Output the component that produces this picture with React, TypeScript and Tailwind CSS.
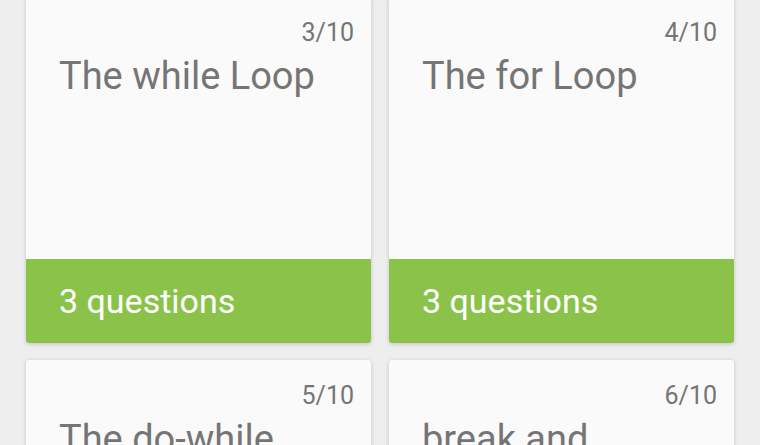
const lessons = [
  { n: "3/10", title: "The while Loop", questions: 3 },
  { n: "4/10", title: "The for Loop", questions: 3 },
  { n: "5/10", title: "The do-while Loop", questions: 3 },
  { n: "6/10", title: "break and continue", questions: 2 },
];

function LessonCard({ n, title, questions }: { n: string; title: string; questions: number }) {
  return (
    <div className="flex h-[346px] flex-col overflow-hidden rounded-[3px] bg-[#fafafa] shadow-[0_1px_4px_rgba(0,0,0,0.18)]">
      {/* body */}
      <div className="flex-1 pt-[21px] pr-[17px] pl-[33px]">
        <div className="text-right text-[25px] leading-[29px] text-[#757575]">{n}</div>
        <div className="mt-[7px] text-[38px] leading-[44px] text-[#757575]">{title}</div>
      </div>
      {/* footer */}
      <div className="flex h-[84px] items-center bg-[#8bc34a] pl-[33px] text-[34px] text-white">
        {questions} questions
      </div>
    </div>
  );
}

export default function App() {
  return (
    <div className="h-[445px] w-full overflow-hidden bg-[#eeeeee] font-['Roboto',sans-serif]">
      <div className="-mt-[3px] grid grid-cols-2 gap-x-[18px] gap-y-[17px] pl-[26px] pr-[26px]">
        {lessons.map((l) => (
          <LessonCard key={l.n} {...l} />
        ))}
      </div>
    </div>
  );
}
